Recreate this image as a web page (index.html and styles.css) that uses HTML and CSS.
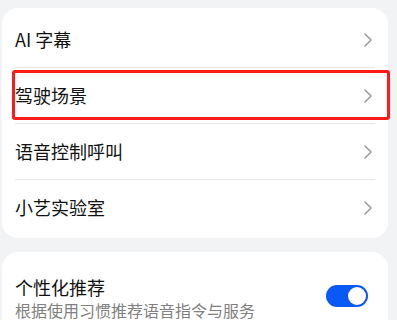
FILE: index.html
```html
<!DOCTYPE html>
<html lang="zh">
<head>
<meta charset="utf-8">
<link rel="stylesheet" href="styles.css">
</head>
<body>
<div class="page">
  <div class="card list">
    <div class="row">
      <div class="row-inner">
        <span class="label">AI 字幕</span>
        <svg class="chev" width="8" height="14" viewBox="0 0 8 14"><polyline points="1,1 7,7 1,13" fill="none" stroke="#9a9a9a" stroke-width="1.5" stroke-linecap="round" stroke-linejoin="round"/></svg>
      </div>
    </div>
    <div class="row">
      <div class="highlight"></div>
      <div class="row-inner">
        <span class="label">驾驶场景</span>
        <svg class="chev" width="8" height="14" viewBox="0 0 8 14"><polyline points="1,1 7,7 1,13" fill="none" stroke="#9a9a9a" stroke-width="1.5" stroke-linecap="round" stroke-linejoin="round"/></svg>
      </div>
    </div>
    <div class="row">
      <div class="row-inner">
        <span class="label">语音控制呼叫</span>
        <svg class="chev" width="8" height="14" viewBox="0 0 8 14"><polyline points="1,1 7,7 1,13" fill="none" stroke="#9a9a9a" stroke-width="1.5" stroke-linecap="round" stroke-linejoin="round"/></svg>
      </div>
    </div>
    <div class="row last">
      <div class="row-inner">
        <span class="label">小艺实验室</span>
        <svg class="chev" width="8" height="14" viewBox="0 0 8 14"><polyline points="1,1 7,7 1,13" fill="none" stroke="#9a9a9a" stroke-width="1.5" stroke-linecap="round" stroke-linejoin="round"/></svg>
      </div>
    </div>
  </div>
  <div class="card setting">
    <div class="texts">
      <div class="title">个性化推荐</div>
      <div class="sub">根据使用习惯推荐语音指令与服务</div>
    </div>
    <div class="toggle"><div class="knob"></div></div>
  </div>
</div>
</body>
</html>
```
FILE: styles.css
```css
html, body {
  margin: 0;
  padding: 0;
  background: #f1f3f5;
  font-family: "Noto Sans CJK SC", "Noto Sans", sans-serif;
  overflow: hidden;
}
.page {
  padding: 8px 9px 0 2px;
  display: flex;
  flex-direction: column;
  gap: 14px;
}
.card {
  background: #ffffff;
  border-radius: 16px;
}
.list {
  padding: 4px 0 2px;
}
.row {
  position: relative;
  height: 56px;
  padding: 0 13px;
}
.row-inner {
  height: 55px;
  display: flex;
  align-items: center;
  justify-content: space-between;
  border-bottom: 1px solid #e6e6e6;
  padding-right: 3px;
}
.row.last .row-inner {
  border-bottom-color: transparent;
}
.label {
  font-size: 18px;
  color: #111111;
  line-height: 24px;
  margin-top: -1px;
}
.chev {
  display: block;
}
.highlight {
  position: absolute;
  left: 10px;
  right: -2px;
  top: 2px;
  height: 50px;
  border: 3px solid #ff1a1a;
  border-radius: 3px;
  box-sizing: border-box;
}
.setting {
  display: flex;
  align-items: center;
  justify-content: space-between;
  padding: 23px 20px 20px 13px;
}
.title {
  font-size: 18px;
  line-height: 24px;
  color: #111111;
}
.sub {
  font-size: 16px;
  line-height: 22px;
  color: #808080;
}
.toggle {
  width: 42px;
  height: 22px;
  border-radius: 11px;
  background: #0a59f7;
  position: relative;
  margin-bottom: 4px;
}
.knob {
  position: absolute;
  right: 2px;
  top: 2px;
  width: 18px;
  height: 18px;
  border-radius: 50%;
  background: #ffffff;
}
```
